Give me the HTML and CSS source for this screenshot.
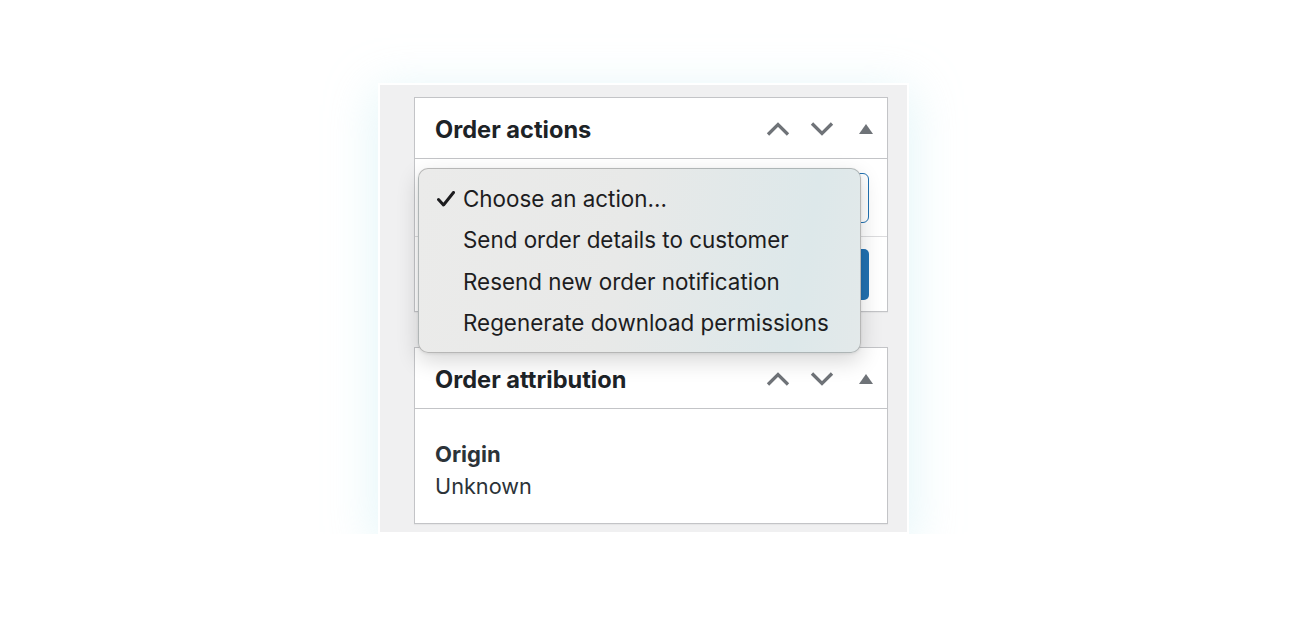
FILE: index.html
```html
<!DOCTYPE html>
<html>
<head>
<meta charset="utf-8">
<link rel="stylesheet" href="styles.css">
</head>
<body>
<div class="frame">
  <div class="panel">
    <div class="panel-head">
      <h2 class="title">Order actions</h2>
      <div class="tools">
        <svg class="chev" viewBox="0 0 24 14"><path d="M2 12.5 L12 2.5 L22 12.5"/></svg>
        <svg class="chev" viewBox="0 0 24 14"><path d="M2 1.5 L12 11.5 L22 1.5"/></svg>
        <svg class="tri" viewBox="0 0 14 10"><polygon points="0,10 7,0 14,10"/></svg>
      </div>
    </div>
    <div class="panel-body">
      <div class="select"></div>
    </div>
    <div class="panel-foot">
      <div class="button"></div>
    </div>
  </div>
  <div class="panel">
    <div class="panel-head">
      <h2 class="title">Order attribution</h2>
      <div class="tools">
        <svg class="chev" viewBox="0 0 24 14"><path d="M2 12.5 L12 2.5 L22 12.5"/></svg>
        <svg class="chev" viewBox="0 0 24 14"><path d="M2 1.5 L12 11.5 L22 1.5"/></svg>
        <svg class="tri" viewBox="0 0 14 10"><polygon points="0,10 7,0 14,10"/></svg>
      </div>
    </div>
    <div class="attr-body">
      <div class="label">Origin</div>
      <div class="value">Unknown</div>
    </div>
  </div>
  <ul class="menu">
    <li class="item checked"><svg class="check" viewBox="0 0 18 16"><path d="M1.5 8.5 L6.5 14 L16.5 1.5"/></svg>Choose an action...</li>
    <li class="item">Send order details to customer</li>
    <li class="item">Resend new order notification</li>
    <li class="item">Regenerate download permissions</li>
  </ul>
</div>
</body>
</html>
```
FILE: styles.css
```css
html, body {
  margin: 0;
  padding: 0;
  background: #ffffff;
}
body {
  font-family: Inter, "Noto Sans", sans-serif;
  color: #1d2327;
}
.frame {
  position: relative;
  box-sizing: border-box;
  margin: 83px 0 0 378px;
  width: 531px;
  height: 451px;
  background: #f0f0f1;
  border: 2px solid #ffffff;
  padding: 12px 19px 0 34px;
  display: flex;
  flex-direction: column;
  gap: 35px;
  box-shadow: 0 10px 45px 4px rgba(185, 232, 240, 0.38);
}
.panel {
  background: #ffffff;
  border: 1px solid #c3c4c7;
  box-shadow: 0 1px 1px rgba(0,0,0,0.04);
}
.panel-head {
  height: 60px;
  border-bottom: 1px solid #c3c4c7;
  display: flex;
  align-items: center;
  justify-content: space-between;
  padding: 0 14px 0 20px;
}
.title {
  margin: 0;
  font-size: 23.6px;
  font-weight: 700;
  color: #1d2327;
  margin-top: 2px;
}
.tools {
  display: flex;
  align-items: center;
  gap: 20px;
  margin-top: 2px;
}
.chev {
  width: 24px;
  height: 14px;
  fill: none;
  stroke: #6f7378;
  stroke-width: 3.3;
}
.tri {
  width: 14px;
  height: 10px;
  fill: #6f7378;
  margin-left: 5px;
}
.panel-body {
  padding: 14px 18px 13px 20px;
  border-bottom: 1px solid #dcdcde;
}
.select {
  box-sizing: border-box;
  height: 50px;
  border: 1.5px solid #2271b1;
  border-radius: 6px;
}
.panel-foot {
  padding: 12px 18px 11px 20px;
  display: flex;
  justify-content: flex-end;
}
.button {
  height: 51px;
  width: 150px;
  background: #2271b1;
  border-radius: 5px;
}
.attr-body {
  padding: 29px 20px 21px 20px;
}
.label {
  font-size: 22px;
  font-weight: 700;
  color: #2c3338;
  line-height: 32px;
}
.value {
  font-size: 21.7px;
  color: #2c3338;
  line-height: 32px;
}
.menu {
  position: absolute;
  left: 38px;
  top: 83px;
  width: 443px;
  box-sizing: border-box;
  height: 185px;
  margin: 0;
  padding: 9px 0 10px;
  list-style: none;
  border: 1px solid rgba(0,0,0,0.22);
  border-radius: 10px;
  background: linear-gradient(100deg, #ebebea 0%, #e8e9e8 45%, #dde8ea 85%, #e3e9ea 100%);
  box-shadow: 0 8px 22px rgba(0,0,0,0.16), 0 1px 3px rgba(0,0,0,0.08);
}
.item {
  position: relative;
  height: 41.4px;
  line-height: 41.4px;
  padding-left: 44px;
  font-size: 22.4px;
  color: #1d1d1f;
  white-space: nowrap;
}
.check {
  position: absolute;
  left: 18px;
  top: 13px;
  width: 18px;
  height: 16px;
  fill: none;
  stroke: #1d1d1f;
  stroke-width: 3;
  stroke-linecap: round;
  stroke-linejoin: round;
}
```
